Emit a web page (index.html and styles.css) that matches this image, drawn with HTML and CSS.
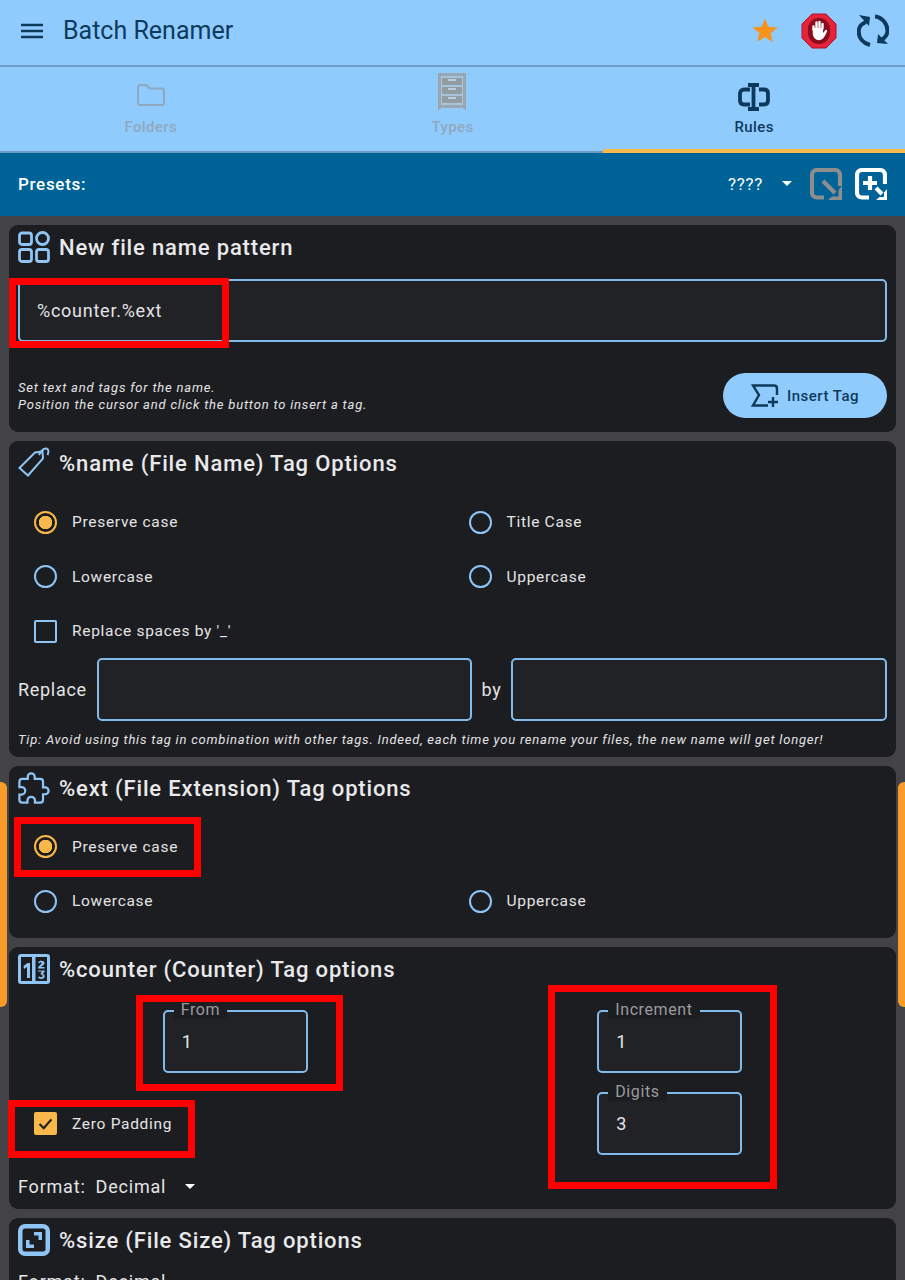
FILE: index.html
```html
<!DOCTYPE html>
<html lang="en">
<head>
  <meta charset="UTF-8">
  <meta name="viewport" content="width=device-width, initial-scale=1">
  <title>Batch Renamer</title>
  <link rel="stylesheet" href="styles.css">
</head>
<body>
  <header class="appbar">
    <svg class="menu-icon" viewBox="0 0 22 16"><path d="M0 2h22M0 8h22M0 14h22"/></svg>
    <div class="app-title">Batch Renamer</div>
    <svg class="star" viewBox="0 0 24 24"><path d="M12 .5l3.300 8 8.700.7-6.600 5.600 2 8.500L12 18.200l-7.400 4.600 2-8.500L0 9.200l8.700-.7z"/></svg>
    <svg class="adblock" viewBox="0 0 36 36">
      <path class="adblock-bg" d="M11 1h14l10 10v14L25 35H11L1 25V11z"/>
      <rect class="adblock-disc" x="7" y="5" width="22" height="26" rx="11"/>
      <path class="adblock-palm" d="M13 15h9v5l2-2-1 5-3 3h-4l-3-4z"/>
      <path class="adblock-hand" d="M12.500 17v-3.500M15.500 15V9.500M18.500 15V9M21.500 15.500V11M13 16v5c0 3 2.500 5 5 5 3 0 4-2 5-4l2-4"/>
    </svg>
    <svg class="sync" viewBox="0 0 32 34">
      <path class="sync-line" d="M9 8C4 10 1.700 14 1.700 17.500 1.700 24 6 29 13 31M18 2.500C25 3 30.500 10 30.500 16.500 30.500 20 28 24 24 26"/>
      <path class="sync-head" d="M2 1l11 2-1 9zM31 30l-11-1 1-9z"/>
    </svg>
  </header>

  <nav class="tabs">
    <div class="tab">
      <svg class="tab-icon tab-icon-folder" viewBox="0 0 28 22"><path class="icon-line" d="M1 3.500C1 2 2 1 3.500 1h6l3 3.500h12c1.500 0 2.500 1 2.500 2.500v11.500c0 1.500-1 2.500-2.500 2.500h-21C2 21 1 20 1 18.500z"/></svg>
      <span>Folders</span>
    </div>
    <div class="tab">
      <svg class="tab-icon tab-icon-tall" viewBox="0 0 28 38">
        <path class="cabinet-frame" d="M0 0h28v38l-3-3H3l-3 3z"/>
        <path class="cabinet-inner" d="M3 3h22v29H3z"/>
        <path class="cabinet-drawer" d="M4 5h20v7H4zM4 14h20v7H4zM4 23h20v7H4z"/>
        <path class="cabinet-handle" d="M10 6h8v2h-8zM10 15h8v2h-8zM10 24h8v2h-8z"/>
      </svg>
      <span>Types</span>
    </div>
    <div class="tab tab-active">
      <svg class="tab-icon" viewBox="0 0 32 28"><path class="icon-bold" d="M12 6.500H6c-2.500 0-4 1.500-4 4v7c0 2.500 1.500 4 4 4h6M21 6.500h5c2.500 0 4 1.500 4 4v7c0 2.500-1.500 4-4 4h-5M10 2h11M10 26h11M15.500 2v24"/></svg>
      <span>Rules</span>
    </div>
  </nav>

  <div class="presets">
    <span class="presets-label">Presets:</span>
    <span class="presets-value">????</span>
    <span class="caret caret-presets"></span>
    <svg class="preset-icon preset-load" viewBox="0 0 32 32"><path d="M14 29.500H7c-3 0-5-2-5-5V7c0-3 2-5 5-5h18c3 0 5 2 5 5v11M13 13l12 12"/><path class="preset-head" d="M32 18v14H18l4-3.500h6.500V22z"/></svg>
    <svg class="preset-icon preset-add" viewBox="0 0 32 32"><path d="M14 29.500H7c-3 0-5-2-5-5V7c0-3 2-5 5-5h18c3 0 5 2 5 5v9M15 8v14M8 15h14M21 20l6 6"/><path class="preset-head" d="M32 21v11H21l3.500-3h4.500v-4.500z"/></svg>
  </div>

  <main class="cards">
    <section class="card card-pattern">
      <h2 class="card-title">
        <svg class="card-icon" viewBox="0 0 32 32"><rect x="1.500" y="2" width="12" height="11.500" rx="2.500"/><rect x="1.500" y="18.500" width="12" height="12" rx="2.500"/><rect x="18.500" y="18.500" width="12" height="12" rx="2.500"/><circle cx="24.500" cy="7.500" r="6"/></svg>
        New file name pattern
      </h2>
      <div class="field field-value">%counter.%ext</div>
      <div class="pattern-foot">
        <p class="hint">Set text and tags for the name.<br>Position the cursor and click the button to insert a tag.</p>
        <button class="insert-btn">
          <svg viewBox="0 0 30 24"><path d="M17 21.500H2L8 11 2 1.500h21c2 0 3 1 3 3V11"/><path d="M22 13v10M17 18h10"/></svg>
          Insert Tag
        </button>
      </div>
      <div class="redbox redbox-pattern"></div>
    </section>

    <section class="card card-name">
      <h2 class="card-title">
        <svg class="card-icon card-icon-thin" viewBox="0 0 32 32"><path d="M1.500 21L17 5.500l7.500-1 .5 7L10 28.500z"/><path d="M21 8c2-4 5-7 7.500-6.500 2 .5 2.500 3 1 6.500"/></svg>
        %name (File Name) Tag Options
      </h2>
      <div class="options">
        <div class="option"><span class="radio radio-on"></span>Preserve case</div>
        <div class="option"><span class="radio"></span>Title Case</div>
        <div class="option"><span class="radio"></span>Lowercase</div>
        <div class="option"><span class="radio"></span>Uppercase</div>
        <div class="option"><span class="check"></span>Replace spaces by '_'</div>
      </div>
      <div class="replace-row">
        <span>Replace</span>
        <div class="field"></div>
        <span>by</span>
        <div class="field"></div>
      </div>
      <p class="hint tip">Tip: Avoid using this tag in combination with other tags. Indeed, each time you rename your files, the new name will get longer!</p>
    </section>

    <section class="card card-ext">
      <h2 class="card-title">
        <svg class="card-icon" viewBox="1 0 23 23"><path class="puzzle" d="M20.500 11H19V7c0-1.100-.9-2-2-2h-4V3.500C13 2.120 11.880 1 10.500 1S8 2.120 8 3.500V5H4c-1.100 0-1.990.9-1.990 2v3.800H3.500c1.490 0 2.700 1.210 2.700 2.700s-1.210 2.700-2.700 2.700H2V20c0 1.100.9 2 2 2h3.800v-1.500c0-1.490 1.210-2.700 2.700-2.700 1.490 0 2.700 1.210 2.700 2.700V22H17c1.100 0 2-.9 2-2v-4h1.500c1.380 0 2.500-1.120 2.500-2.500S21.880 11 20.500 11z"/></svg>
        %ext (File Extension) Tag options
      </h2>
      <div class="options">
        <div class="option option-wide"><span class="radio radio-on"></span>Preserve case</div>
        <div class="option"><span class="radio"></span>Lowercase</div>
        <div class="option"><span class="radio"></span>Uppercase</div>
      </div>
      <div class="redbox redbox-ext"></div>
    </section>

    <section class="card card-counter">
      <h2 class="card-title">
        <svg class="card-icon card-icon-solid" viewBox="0 0 32 32">
          <rect class="icon-solid" x="0" y="1" width="32" height="30" rx="3"/>
          <path class="icon-dark" d="M3 4h11v24H3zM17.500 4H29v24H17.500z"/>
          <path class="icon-solid" d="M5.500 13l4-3h2.500v15H9V14l-3 2zM20 9.500c1-2.500 6.500-2.500 6.500.5 0 2-3 3-3.500 4h3.500v1.500h-6.500c0-3 3.500-3.500 3.500-5.500 0-1-2-1-2 .5zM20 17.500h6.500v1.500l-2 2c3 0 3 5-1 5-2 0-3-1-3.500-2l1.500-.5c.5 1 3.200 1 3.200-.5 0-1-1-1.500-2-1.500v-1.500l1.500-1.500H20z"/>
        </svg>
        %counter (Counter) Tag options
      </h2>
      <div class="counter-grid">
        <div class="counter-col">
          <div class="field field-number"><span class="field-label">From</span>1</div>
          <div class="option option-zero"><span class="check check-on"><svg viewBox="0 0 16 16"><path d="M3 8.500l3.500 3.500L13 4.500"/></svg></span>Zero Padding</div>
          <div class="format-row"><span>Format:</span><span>Decimal</span><span class="caret"></span></div>
        </div>
        <div class="counter-col counter-right">
          <div class="field field-number"><span class="field-label">Increment</span>1</div>
          <div class="field field-number"><span class="field-label">Digits</span>3</div>
        </div>
      </div>
      <div class="redbox redbox-from"></div>
      <div class="redbox redbox-zero"></div>
      <div class="redbox redbox-right"></div>
    </section>

    <section class="card card-size">
      <h2 class="card-title">
        <svg class="card-icon card-icon-solid" viewBox="0 0 32 32">
          <rect class="icon-solid" x="0" y="0" width="32" height="32" rx="7"/>
          <rect class="icon-dark" x="4.500" y="4.500" width="23" height="23" rx="2.500"/>
          <path class="icon-solid" d="M16 8h8v8h-3.500v-4.500H16zM8 16h3.500v4.500H16V24H8z"/>
        </svg>
        %size (File Size) Tag options
      </h2>
      <div class="format-row"><span>Format:</span><span>Decimal</span></div>
    </section>
  </main>

  <div class="scroll-mark scroll-left"></div>
  <div class="scroll-mark scroll-right"></div>
</body>
</html>
```

FILE: styles.css
```css
* { box-sizing: border-box; margin: 0; padding: 0; }
html, body { height: 100%; overflow: hidden; }
body { position: relative; background: #434347; font-family: Roboto, sans-serif; color: #e4e4e6; font-size: 15.500px; letter-spacing: .7px; }

.appbar { display: flex; align-items: center; height: 67px; background: #90cbfe; border-bottom: 2px solid #6d9cc6; padding: 0 16px 4px 21px; color: #0f3a5c; }
.menu-icon { width: 22px; height: 16px; fill: none; stroke: #0f3a5c; stroke-width: 2.400; }
.app-title { margin-left: 20px; font-size: 25px; letter-spacing: 0; flex: 1; }
.star { width: 26px; height: 25px; fill: #f7931a; }
.adblock { width: 36px; height: 36px; margin-left: 23px; }
.adblock-bg { fill: #e5233b; stroke: #b3122a; stroke-width: 1; }
.adblock-disc { fill: #8a0c1e; }
.adblock-palm { fill: #fff; }
.adblock-hand { fill: none; stroke: #fff; stroke-width: 2.400; stroke-linecap: round; }
.sync { width: 32px; height: 34px; margin-left: 20px; }
.sync-line { fill: none; stroke: #0d3a5c; stroke-width: 4; }
.sync-head { fill: #0d3a5c; }

.tabs { display: grid; grid-template-columns: repeat(3, 1fr); height: 86px; background: #90cbfe; border-bottom: 2px solid #6d9cc6; }
.tab { position: relative; display: flex; flex-direction: column; align-items: center; color: #8fa8bd; font-size: 15px; font-weight: 500; letter-spacing: .4px; height: 84px; padding-top: 16px; }
.tab span { position: absolute; top: 51px; }
.tab-icon { width: 32px; height: 28px; }
.tab-icon-folder { width: 28px; height: 22px; margin-top: 1px; }
.tab-icon-tall { width: 28px; height: 38px; margin-top: -10px; }
.icon-line { fill: none; stroke: #8fa8bd; stroke-width: 2; }
.cabinet-frame { fill: #99a7b3; }
.cabinet-inner { fill: #a9c3da; }
.cabinet-drawer { fill: #939ba3; }
.cabinet-handle { fill: #b8cfe2; }
.icon-bold { fill: none; stroke: #0d3a5c; stroke-width: 3.800; }
.tab-active { color: #0f3a5c; }
.tab-active::after { content: ""; position: absolute; left: 0; right: 0; bottom: -2px; height: 4px; background: #f9b84a; }

.presets { display: flex; align-items: center; height: 63px; background: #006397; color: #fff; padding: 0 18px 2px; }
.presets-label { flex: 1; font-size: 17px; font-weight: 500; }
.presets-value { font-size: 17px; }
.caret { display: inline-block; width: 0; height: 0; border: 5px solid transparent; border-top-color: #fff; border-bottom: 0; }
.caret-presets { margin: 0 18px 0 19px; }
.preset-icon { width: 32px; height: 32px; fill: none; stroke-width: 4.200; }
.preset-icon path.preset-head { stroke: none; }
.preset-load { stroke: #8e8e8e; }
.preset-load .preset-head { fill: #8e8e8e; }
.preset-add { stroke: #fff; margin-left: 13px; }
.preset-add .preset-head { fill: #fff; }

.cards { display: flex; flex-direction: column; gap: 9px; padding: 9px; }
.card { position: relative; background: #1c1d20; border-radius: 9px; padding: 0 9px; }
.card-title { display: flex; align-items: center; gap: 9px; height: 44px; font-size: 22px; font-weight: 500; letter-spacing: .84px; color: #e9e9eb; }
.card-ext .card-title, .card-counter .card-title, .card-size .card-title { padding-top: 1px; }
.card-icon { width: 32px; height: 32px; flex: none; fill: none; stroke: #8ec5f5; stroke-width: 2.800; }
.card-icon-thin { stroke-width: 2; }
.card-icon .puzzle { stroke-width: 1.600; }
.card-icon-solid { stroke: none; }
.icon-solid { fill: #8ec5f5; fill-rule: evenodd; }
.icon-dark { fill: #1c1d20; }

.field { display: flex; align-items: center; position: relative; height: 63px; background: #212226; border: 2px solid #82bbe9; border-radius: 5px; padding-left: 17px; font-size: 18px; letter-spacing: .75px; }
.field-value { margin-top: 10px; }
.field-number { width: 145px; }
.field-label { position: absolute; left: 9px; top: -11px; padding: 0 7px; background: #1c1d20; color: #9b9b9e; font-size: 16px; letter-spacing: .6px; line-height: 18px; }

.pattern-foot { display: flex; align-items: flex-start; justify-content: space-between; margin-top: 31px; padding-bottom: 14px; }
.hint { font-size: 13px; font-style: italic; line-height: 17px; letter-spacing: .8px; padding-top: 6px; }
.insert-btn { display: flex; align-items: center; justify-content: center; gap: 6px; width: 164px; height: 45px; border: 0; border-radius: 23px; background: #90cbfe; color: #0f3a5c; font: inherit; font-size: 15px; font-weight: 500; letter-spacing: .5px; }
.insert-btn svg { width: 30px; height: 24px; fill: none; stroke: #0f3a5c; stroke-width: 2.400; }

.options { display: grid; grid-template-columns: 1fr 1fr; padding-top: 10px; }
.option { display: flex; align-items: center; height: 54.500px; padding-left: 16px; gap: 15px; }
.option-wide { grid-column: 1 / 3; }
.card-ext .options { padding-bottom: 9px; }
.radio { width: 23px; height: 23px; border: 2px solid #8ec5f5; border-radius: 50%; flex: none; }
.radio-on { border-color: #f9b84a; background: radial-gradient(circle, #f9b84a 6.500px, transparent 7px); }
.check { width: 23px; height: 23px; border: 2px solid #8ec5f5; border-radius: 2px; flex: none; }
.check-on { border-color: #f9b84a; background: #f9b84a; }
.check-on svg { display: block; width: 19px; height: 19px; fill: none; stroke: #1c1d20; stroke-width: 1.800; }

.replace-row { display: flex; align-items: center; height: 63px; margin-top: -1px; }
.replace-row span { font-size: 18px; letter-spacing: .7px; }
.replace-row .field:nth-child(2) { width: 376px; margin: 0 9px 0 10px; }
.replace-row .field:nth-child(4) { width: 376px; margin-left: 10px; }
.tip { padding: 10px 0 9px; letter-spacing: .78px; }

.counter-grid { display: grid; grid-template-columns: 1fr 1fr; padding-top: 19px; }
.counter-col { display: flex; flex-direction: column; align-items: center; }
.counter-right { gap: 19px; }
.option-zero { align-self: stretch; height: 46px; margin-top: 28px; }
.format-row { display: flex; align-items: center; gap: 10px; align-self: stretch; height: 32px; font-size: 18px; letter-spacing: .8px; margin-top: 4px; }
.counter-col .format-row { margin: 24px 0 6px; }
.format-row .caret { margin-left: 9px; }

.redbox { position: absolute; border: 7px solid #f00; }
.redbox-pattern { left: 0; top: 53px; width: 220px; height: 70px; }
.redbox-ext { left: 5px; top: 51px; width: 187px; height: 60px; }
.redbox-from { left: 127px; top: 48px; width: 207px; height: 96px; }
.redbox-zero { left: -1px; top: 153px; width: 187px; height: 58px; }
.redbox-right { left: 539px; top: 38px; width: 229px; height: 204px; }

.scroll-mark { position: absolute; top: 782px; width: 7px; height: 225px; background: #f89b29; }
.scroll-left { left: 0; border-radius: 0 6px 6px 0; }
.scroll-right { right: 0; border-radius: 6px 0 0 6px; }
```
